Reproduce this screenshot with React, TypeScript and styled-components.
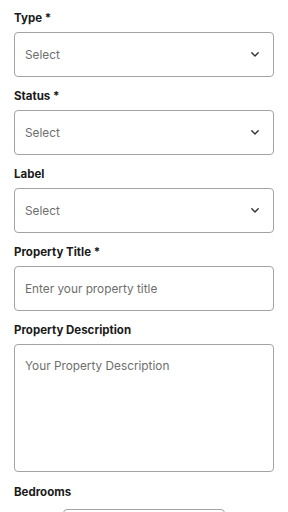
import React from "react";
import styled, { createGlobalStyle } from "styled-components";

const Global = createGlobalStyle`
  html, body { margin: 0; padding: 0; background: #fff; }
  body { font-family: Inter, "Noto Sans", sans-serif; -webkit-font-smoothing: antialiased; }
  * { box-sizing: border-box; }
`;

const Form = styled.div`
  display: flex;
  flex-direction: column;
  padding: 11px 14px 0 14px;
  width: 288px;
  height: 512px;
  overflow: hidden;
`;

const Field = styled.div<{ $mb?: number; $gap?: number }>`
  display: flex;
  flex-direction: column;
  gap: ${(p) => p.$gap ?? 7}px;
  margin-bottom: ${(p) => p.$mb ?? 12}px;
`;

const Label = styled.label`
  font-size: 11.5px;
  font-weight: 700;
  color: #1a1a1a;
  line-height: 14px;
`;

const Box = styled.div<{ $h?: number; $top?: boolean }>`
  display: flex;
  align-items: ${(p) => (p.$top ? "flex-start" : "center")};
  justify-content: space-between;
  height: ${(p) => p.$h ?? 45}px;
  border: 1px solid #a3a3a3;
  border-radius: 4px;
  padding: ${(p) => (p.$top ? "14px 10px" : "0 14px 0 10px")};
  background: #fff;
`;

const Placeholder = styled.span`
  font-size: 11.8px;
  color: #6e6e6e;
  line-height: 14px;
`;

const Small = styled.div`
  margin-left: 49px;
  width: 162px;
  height: 30px;
  border: 1px solid #a3a3a3;
  border-radius: 4px;
`;

const Chevron = () => (
  <svg width="8" height="5" viewBox="0 0 8 5" fill="none">
    <path d="M0.8 0.8l3.2 3.2L7.2 0.8" stroke="#333" strokeWidth="1.4" strokeLinecap="round" strokeLinejoin="round" />
  </svg>
);

const SelectField = ({ label }: { label: string }) => (
  <Field>
    <Label>{label}</Label>
    <Box>
      <Placeholder>Select</Placeholder>
      <Chevron />
    </Box>
  </Field>
);

export default function App() {
  return (
    <>
      <Global />
      <Form>
        <SelectField label="Type *" />
        <SelectField label="Status *" />
        <SelectField label="Label" />
        <Field>
          <Label>Property Title *</Label>
          <Box>
            <Placeholder>Enter your property title</Placeholder>
          </Box>
        </Field>
        <Field $mb={13}>
          <Label>Property Description</Label>
          <Box $h={128} $top>
            <Placeholder>Your Property Description</Placeholder>
          </Box>
        </Field>
        <Field $gap={10}>
          <Label>Bedrooms</Label>
          <Small />
        </Field>
      </Form>
    </>
  );
}
